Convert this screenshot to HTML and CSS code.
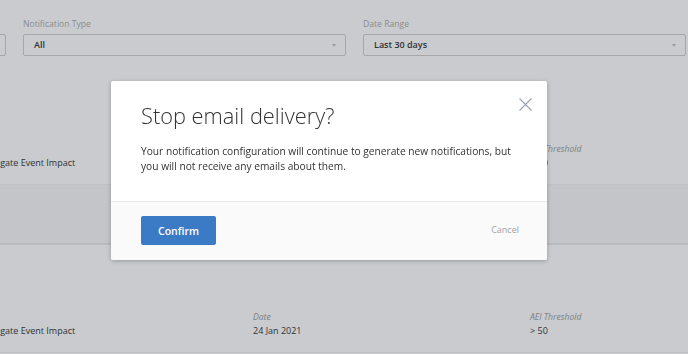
FILE: index.html
```html
<!DOCTYPE html>
<html lang="en">

<head>
    <meta charset="UTF-8">
    <meta name="viewport" content="width=device-width, initial-scale=1.0">
    <title>Notifications</title>
    <link rel="stylesheet" href="styles.css">
</head>
<body>
    <div class="page">
        <div class="filters">
            <div class="filter">
                <label class="filter-label">Status</label>
                <div class="select">Active</div>
            </div>
            <div class="filter">
                <label class="filter-label">Notification Type</label>
                <div class="select">All</div>
            </div>
            <div class="filter">
                <label class="filter-label">Date Range</label>
                <div class="select">Last 30 days</div>
            </div>
        </div>

        <div class="result">
            <div class="cell">
                <div class="cell-value">Aggregate Event Impact</div>
            </div>
            <div class="cell">
                <div class="cell-label">Date</div>
                <div class="cell-value">24 Jan 2021</div>
            </div>
            <div class="cell">
                <div class="cell-label">AEI Threshold</div>
                <div class="cell-value">&gt; 50</div>
            </div>
        </div>
        <div class="band"></div>
        <div class="result">
            <div class="cell">
                <div class="cell-value">Aggregate Event Impact</div>
            </div>
            <div class="cell">
                <div class="cell-label">Date</div>
                <div class="cell-value">24 Jan 2021</div>
            </div>
            <div class="cell">
                <div class="cell-label">AEI Threshold</div>
                <div class="cell-value">&gt; 50</div>
            </div>
        </div>
    </div>

    <div class="backdrop"></div>

    <div class="modal">
        <div class="modal-body">
            <button class="modal-close" aria-label="Close">
                <svg width="13" height="13" viewBox="0 0 13 13">
                    <path d="M0.5 0.5 L12.5 12.5 M12.5 0.5 L0.5 12.5" stroke="#9aa3ad" stroke-width="1.1" fill="none"/>
                </svg>
            </button>
            <h2 class="modal-title">Stop email delivery?</h2>
            <p class="modal-text">Your notification configuration will continue to generate new notifications, but you will not receive any emails about them.</p>
        </div>
        <div class="modal-footer">
            <button class="confirm-button">Confirm</button>
            <a class="cancel-link" href="#">Cancel</a>
        </div>
    </div>
</body>
</html>
```

FILE: styles.css
```css
body {
    font-family: "Open Sans", sans-serif;
    margin: 0;
    padding: 0;
    background-color: #fcfcfd;
    color: #333;
    overflow: hidden;
}

.page {
    padding-top: 17px;
}

.filters {
    display: grid;
    grid-template-columns: 323px 323px 323px;
    gap: 17px;
    margin-left: -317px;
}

.filter-label {
    display: block;
    font-size: 8.6px;
    line-height: 14px;
    color: #aaa;
    margin-bottom: 3px;
}

.select {
    position: relative;
    height: 20px;
    line-height: 20px;
    border: 1px solid #ccc;
    border-radius: 2px;
    padding-left: 10px;
    font-size: 9px;
    font-weight: 600;
    color: #333;
}

.select::after {
    content: "";
    position: absolute;
    right: 9px;
    top: 9px;
    border-left: 2.5px solid transparent;
    border-right: 2.5px solid transparent;
    border-top: 3px solid #bbb;
}

.result {
    display: grid;
    grid-template-columns: 277px 277px 1fr;
    margin-left: -24px;
    height: 108px;
    box-sizing: border-box;
    padding-top: 65px;
    border-bottom: 1px solid #eee;
}

.filters + .result {
    margin-top: 21px;
}

.cell {
    display: flex;
    flex-direction: column;
    justify-content: flex-end;
    padding-bottom: 14px;
}

.cell-label {
    font-size: 8.6px;
    line-height: 14px;
    font-style: italic;
    color: #999;
}

.cell-value {
    font-size: 9px;
    line-height: 14px;
    color: #333;
}

.band {
    height: 58px;
    background-color: #f3f4f5;
    border-bottom: 2px solid #e4e6e8;
}

.backdrop {
    position: fixed;
    top: 0;
    left: 0;
    right: 0;
    bottom: 0;
    background-color: rgba(40, 50, 60, 0.24);
}

.modal {
    position: absolute;
    left: 111px;
    top: 81px;
    width: 436px;
    background-color: white;
    border-radius: 2px;
    box-shadow: 0 1px 4px rgba(0, 0, 0, 0.25);
    overflow: hidden;
}

.modal-body {
    position: relative;
    height: 121px;
    box-sizing: border-box;
    padding: 20px 30px 0;
    border-bottom: 1px solid #e8e9ea;
}

.modal-close {
    position: absolute;
    top: 17px;
    right: 15px;
    padding: 0;
    border: none;
    background: none;
    cursor: pointer;
}

.modal-title {
    margin: 0 0 13px;
    font-size: 21.8px;
    font-weight: 300;
    line-height: 30px;
    color: #333;
}

.modal-text {
    margin: 0;
    font-size: 10.2px;
    line-height: 15px;
    color: #333;
}

.modal-footer {
    display: flex;
    justify-content: space-between;
    align-items: center;
    height: 58px;
    padding: 0 28px 0 30px;
    background-color: #fafafa;
}

.confirm-button {
    width: 75px;
    height: 29px;
    margin-top: -1px;
    border: none;
    border-radius: 2px;
    background-color: #3b7bc6;
    color: white;
    font-family: "Open Sans", sans-serif;
    font-size: 10.5px;
    font-weight: 600;
    cursor: pointer;
}

.cancel-link {
    margin-top: -3px;
    font-size: 9px;
    color: #a3a3a3;
    text-decoration: none;
}
```
